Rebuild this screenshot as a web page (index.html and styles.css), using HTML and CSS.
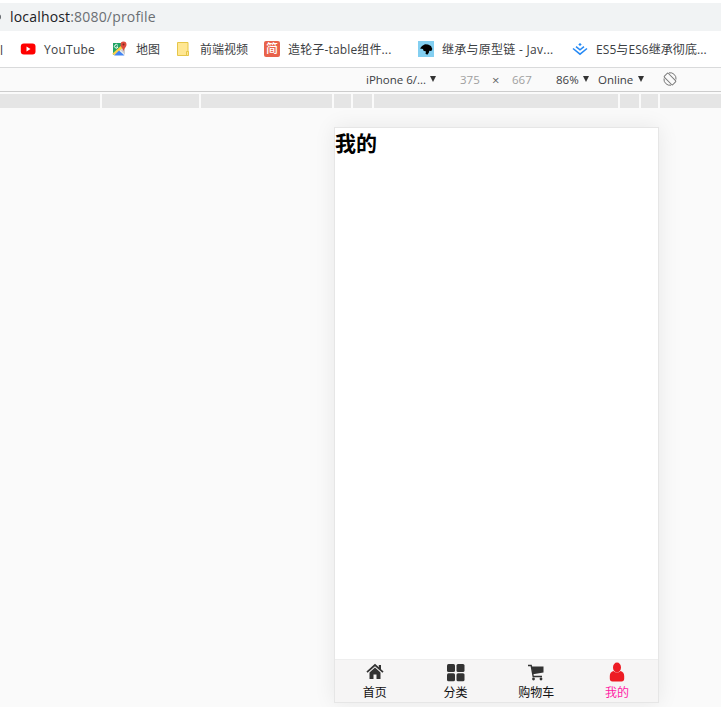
FILE: index.html
```
<!DOCTYPE html>
<html lang="zh-CN">
<head>
<meta charset="utf-8">
<title>profile</title>
<link rel="stylesheet" href="styles.css">
</head>
<body>
<header class="address"><span class="info-dot"></span><span class="url"><b>localhost</b>:8080/profile</span></header>
<nav class="bookmarks">
  <span class="cut">l</span>
  <a class="bookmark"><svg width="16" height="16" viewBox="0 0 16 16"><rect x=".8" y="2.500" width="14.700" height="11" rx="3" fill="#f00"/><path d="M6.500 5.500v5l4-2.500z" fill="#fff"/></svg><span class="t-youtube">YouTube</span></a>
  <a class="bookmark"><svg width="16" height="16" viewBox="0 0 16 16"><path d="M1 2h12v12H1z" fill="#eee"/><path d="M1 2h9v5L1 14z" fill="#20a464"/><path d="M0 13L11 3l2 2L3 14z" fill="#fbd14b"/><path d="M2 14.500l5-5 5.500 5z" fill="#4285f4"/><path d="M8.500 9l4.500 4.500V7z" fill="#ccc"/><path d="M5.800 4.300A1.800 1.800 0 1 0 6 6H4.400" fill="none" stroke="#fff"/><path d="M11.500 10.500C11 7 8.500 6.500 8.500 3.500a3 3 0 0 1 6 0C14.500 6.500 12 7 11.500 10.500z" fill="#df4b3d"/><circle cx="11.500" cy="3.500" r="1" fill="#80271f"/></svg><span>地图</span></a>
  <a class="bookmark"><svg width="16" height="16" viewBox="0 0 16 16"><path d="M1.500 1.500h10.500v13h-10.500z" fill="#ffe793" stroke="#e6c649"/><path d="M10.500 10.500h2v4h-2z" fill="#ffe793" stroke="#e6c649"/></svg><span>前端视频</span></a>
  <a class="bookmark"><i class="jian">简</i><span class="t-table">造轮子-table组件...</span></a>
  <a class="bookmark"><svg width="16" height="16" viewBox="0 0 16 16"><path d="M0 0h16v16H0z" fill="#83cff1"/><path d="M2 7.500L4 5l3-1.700 3 .2 3 1.500 1.300 3-1 2-2-.3-.5 2-1.500 2-1.800-1L8 10.500 5.500 9.700 5 8z" fill="#000"/></svg><span class="t-java">继承与原型链 - Jav...</span></a>
  <a class="bookmark"><svg width="16" height="16" viewBox="0 0 16 16" fill="none" stroke="#2589f5" stroke-width="1.500"><path d="M1 7.500l7 5.700 7-5.700M4 5.700l4 3.200 4-3.200"/><path d="M8 2l1.700 1.500L8 5 6.300 3.500z" fill="#2589f5" stroke="none"/></svg><span class="t-es">ES5与ES6继承彻底...</span></a>
</nav>
<div class="toolbar">
  <span class="device">iPhone 6/...</span><i class="arrow"></i>
  <span class="dim">375</span><span class="times">×</span><span class="dim">667</span>
  <span class="zoom">86%</span><i class="arrow"></i>
  <span class="online">Online</span><i class="arrow"></i>
  <svg class="rotate" width="14" height="14" viewBox="0 0 14 14" fill="none" stroke="#777"><rect x="4.200" y="1" width="5.600" height="12" rx="1" transform="rotate(-45 7 7)"/><path d="M6 .8A6 6 0 0 1 13 7.500M8 13.200A6 6 0 0 1 1 6.500"/></svg>
</div>
<div class="ruler"><i></i><i></i><i></i><i></i><i></i><i></i><i></i><i></i><i></i></div>
<main class="stage">
  <section class="phone">
    <h1>我的</h1>
    <nav class="tabs">
      <a class="tab"><svg width="18" height="20" viewBox="0 0 18 20"><path d="M1 10.200L9 3l8 7.200" fill="none" stroke="#333" stroke-width="1.700"/><path d="M12.800 3H15v5l-2.200-2z" fill="#333"/><path d="M3.500 10.500L9 5.600l5.500 4.900V17h-4v-4.500h-3V17h-4z" fill="#333"/></svg><span>首页</span></a>
      <a class="tab"><svg width="18" height="20" viewBox="0 0 18 20" fill="#333"><rect x="0" y="2" width="8" height="8" rx="1.500"/><rect x="9.500" y="2" width="8" height="8" rx="1.500"/><rect x="0" y="11.300" width="8" height="8" rx="1.500"/><rect x="9.500" y="11.300" width="8" height="8" rx="1.500"/></svg><span>分类</span></a>
      <a class="tab"><svg width="18" height="20" viewBox="0 0 18 20"><path d="M1 3.500h3.200l2 11H15" fill="none" stroke="#333" stroke-width="1.400"/><path d="M4.500 4.500H16.500v6L6 12.200z" fill="#333"/><circle cx="6.500" cy="17" r="1.400" fill="#333"/><circle cx="14" cy="17" r="1.400" fill="#333"/></svg><span>购物车</span></a>
      <a class="tab active"><svg width="18" height="20" viewBox="0 0 18 20" fill="#ed1c24"><ellipse cx="9" cy="5.500" rx="4" ry="4.900"/><path d="M5.500 9Q9 12 12.500 9 16.200 10 16.200 14v2.500q0 3-2.700 3h-9Q1.800 19.500 1.800 16.500V14q0-4 3.700-5z"/></svg><span>我的</span></a>
    </nav>
  </section>
</main>
</body>
</html>
```
FILE: styles.css
```
* { box-sizing: border-box; }
body {
  margin: 0;
  height: 707px;
  overflow: hidden;
  display: flex;
  flex-direction: column;
  background: #fafafa;
  color: #3c4043;
  font: 12px "Open Sans", "Noto Sans CJK SC", sans-serif;
}
i { font-style: normal; }
svg { display: block; flex: none; }
.address {
  height: 31px;
  border-top: 3px solid #fff;
  background: #f1f3f4;
  display: flex;
  align-items: center;
  overflow: hidden;
}
.info-dot { width: 6px; height: 6px; margin-left: -5px; margin-right: 9px; border-radius: 50%; background: #5f6368; }
.url { color: #6b6f73; font-size: 14px; line-height: 28px; letter-spacing: .18px; white-space: nowrap; }
.url b { color: #202124; font-weight: 400; }
.bookmarks {
  height: 37px;
  background: #fff;
  border-bottom: 1px solid #d9dadb;
  display: grid;
  grid-template-columns: 20px 92px 64px 88px 154px 154px 149px;
  align-items: center;
}
.bookmark { display: flex; align-items: center; gap: 8px; white-space: nowrap; line-height: 18px; }
.bookmark span, .cut { padding-top: 2px; }
.t-youtube { letter-spacing: .25px; }
.t-table { letter-spacing: .15px; }
.t-java { letter-spacing: .27px; }
.t-es { letter-spacing: .07px; }
.jian { width: 16px; height: 16px; border-radius: 2px; background: #e8624a; color: #fff; font-size: 12px; font-weight: 500; line-height: 15px; text-align: center; flex: none; }
.toolbar {
  height: 24px;
  border-bottom: 1px solid #ccc;
  background: #fafafa;
  display: grid;
  grid-template-columns: 64px 30px 32px 20px 44px 27px 15px 40px 25px 14px;
  padding-left: 366px;
  padding-top: 1px;
  align-items: center;
  line-height: 20px;
  white-space: nowrap;
  font-size: 11.5px;
}
.arrow { width: 0; border: 3.5px solid transparent; border-top: 6px solid #333; border-bottom: 0; margin-top: -2px; }
.dim { color: #a0a0a0; }
.times { color: #666; font-size: 13px; }
.rotate { margin-top: -3px; }
.ruler {
  height: 14px;
  margin: 2px 0 0;
  flex: none;
  display: grid;
  grid-template-columns: 100px 97px 131px 17px 19px 244px 19px 17px 61px;
  column-gap: 2px;
}
.ruler i { background: #e5e5e5; }
.stage { padding: 19px 0 0 334px; }
.phone {
  width: 325px;
  height: 576px;
  border: 1px solid #e6e6e6;
  background: #fff;
  box-shadow: 0 0 20px rgba(0, 0, 0, .08);
  display: flex;
  flex-direction: column;
}
h1 { margin: 0; color: #000; font: bold 21px/29px "Noto Sans CJK SC", sans-serif; }
.tabs { margin-top: auto; height: 43px; border-top: 1px solid #eee; background: #f6f5f5; display: grid; grid-template-columns: repeat(4, 1fr); }
.tab { display: flex; flex-direction: column; align-items: center; gap: 2px; padding-top: 2px; padding-right: 1px; color: #111; line-height: 18px; }
.tab.active { color: #ff1ca5; }
```
